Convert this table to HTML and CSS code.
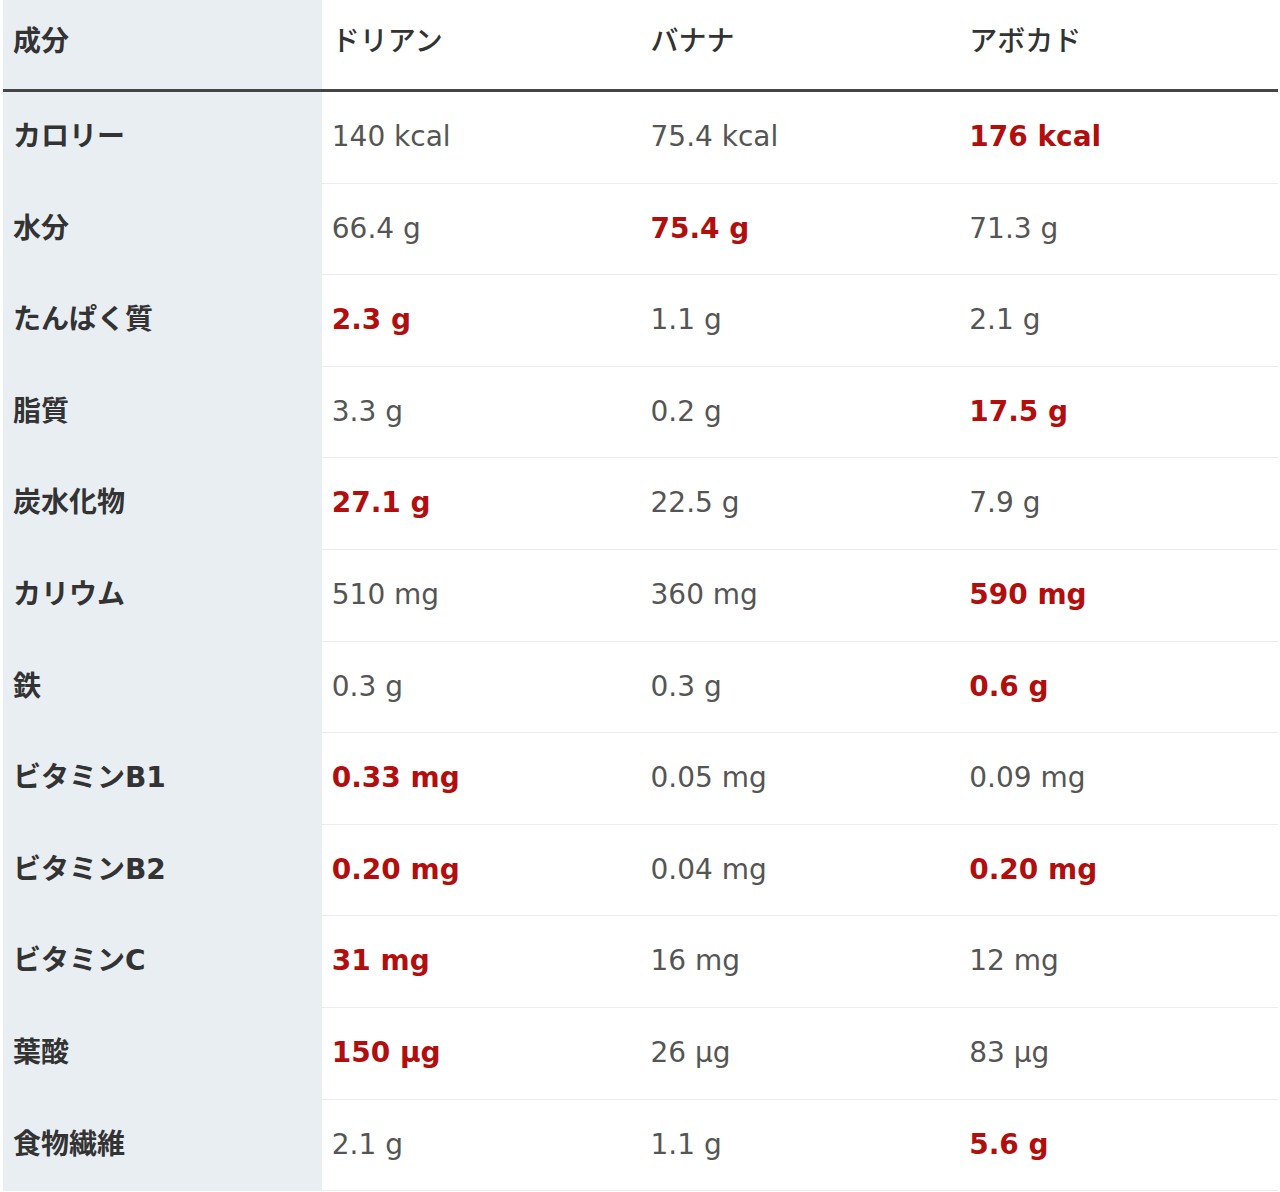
FILE: index.html
```html
<!DOCTYPE html>
<html lang="ja">
<head>
<meta charset="utf-8">
<title>栄養成分比較</title>
<link rel="stylesheet" href="styles.css">
</head>
<body>
<table class="nutri">
  <thead>
    <tr>
      <th class="label">成分</th>
      <th>ドリアン</th>
      <th>バナナ</th>
      <th>アボカド</th>
    </tr>
  </thead>
  <tbody>
    <tr><th class="label">カロリー</th><td>140 kcal</td><td>75.4 kcal</td><td class="hi">176 kcal</td></tr>
    <tr><th class="label">水分</th><td>66.4 g</td><td class="hi">75.4 g</td><td>71.3 g</td></tr>
    <tr><th class="label">たんぱく質</th><td class="hi">2.3 g</td><td>1.1 g</td><td>2.1 g</td></tr>
    <tr><th class="label">脂質</th><td>3.3 g</td><td>0.2 g</td><td class="hi">17.5 g</td></tr>
    <tr><th class="label">炭水化物</th><td class="hi">27.1 g</td><td>22.5 g</td><td>7.9 g</td></tr>
    <tr><th class="label">カリウム</th><td>510 mg</td><td>360 mg</td><td class="hi">590 mg</td></tr>
    <tr><th class="label">鉄</th><td>0.3 g</td><td>0.3 g</td><td class="hi">0.6 g</td></tr>
    <tr><th class="label">ビタミンB1</th><td class="hi">0.33 mg</td><td>0.05 mg</td><td>0.09 mg</td></tr>
    <tr><th class="label">ビタミンB2</th><td class="hi">0.20 mg</td><td>0.04 mg</td><td class="hi">0.20 mg</td></tr>
    <tr><th class="label">ビタミンC</th><td class="hi">31 mg</td><td>16 mg</td><td>12 mg</td></tr>
    <tr><th class="label">葉酸</th><td class="hi">150 µg</td><td>26 µg</td><td>83 µg</td></tr>
    <tr><th class="label">食物繊維</th><td>2.1 g</td><td>1.1 g</td><td class="hi">5.6 g</td></tr>
  </tbody>
</table>
</body>
</html>
```

FILE: styles.css
```css
html, body {
  margin: 0;
  padding: 0;
  background: #ffffff;
}

body {
  font-family: "DejaVu Sans", "Noto Sans CJK JP", sans-serif;
  font-size: 28px;
  color: #555555;
}

.nutri {
  margin-left: 3px;
  width: 1275px;
  table-layout: fixed;
  border-collapse: separate;
  border-spacing: 0;
}

.nutri th,
.nutri td {
  box-sizing: border-box;
  padding: 0 10px 0 10px;
  text-align: left;
  vertical-align: middle;
  line-height: 1.3;
  white-space: nowrap;
}

.nutri thead th {
  height: 92px;
  padding-bottom: 10px;
  border-bottom: 3px solid #454545;
  font-family: "Noto Sans CJK JP", sans-serif;
  font-weight: 500;
  color: #333333;
}

.nutri tbody th,
.nutri tbody td {
  height: 91.6px;
  border-bottom: 1px solid #ececec;
}

.nutri .label {
  background: #e9eef3;
  font-family: "DejaVu Sans", "Noto Sans CJK JP", sans-serif;
  font-weight: 700;
  color: #333333;
}

.nutri tbody th.label {
  border-bottom-color: #e9eef3;
}

.nutri thead th.label {
  font-family: "Noto Sans CJK JP", sans-serif;
  font-weight: 700;
}

.nutri td.hi {
  color: #b30e0e;
  font-weight: 700;
}
```
